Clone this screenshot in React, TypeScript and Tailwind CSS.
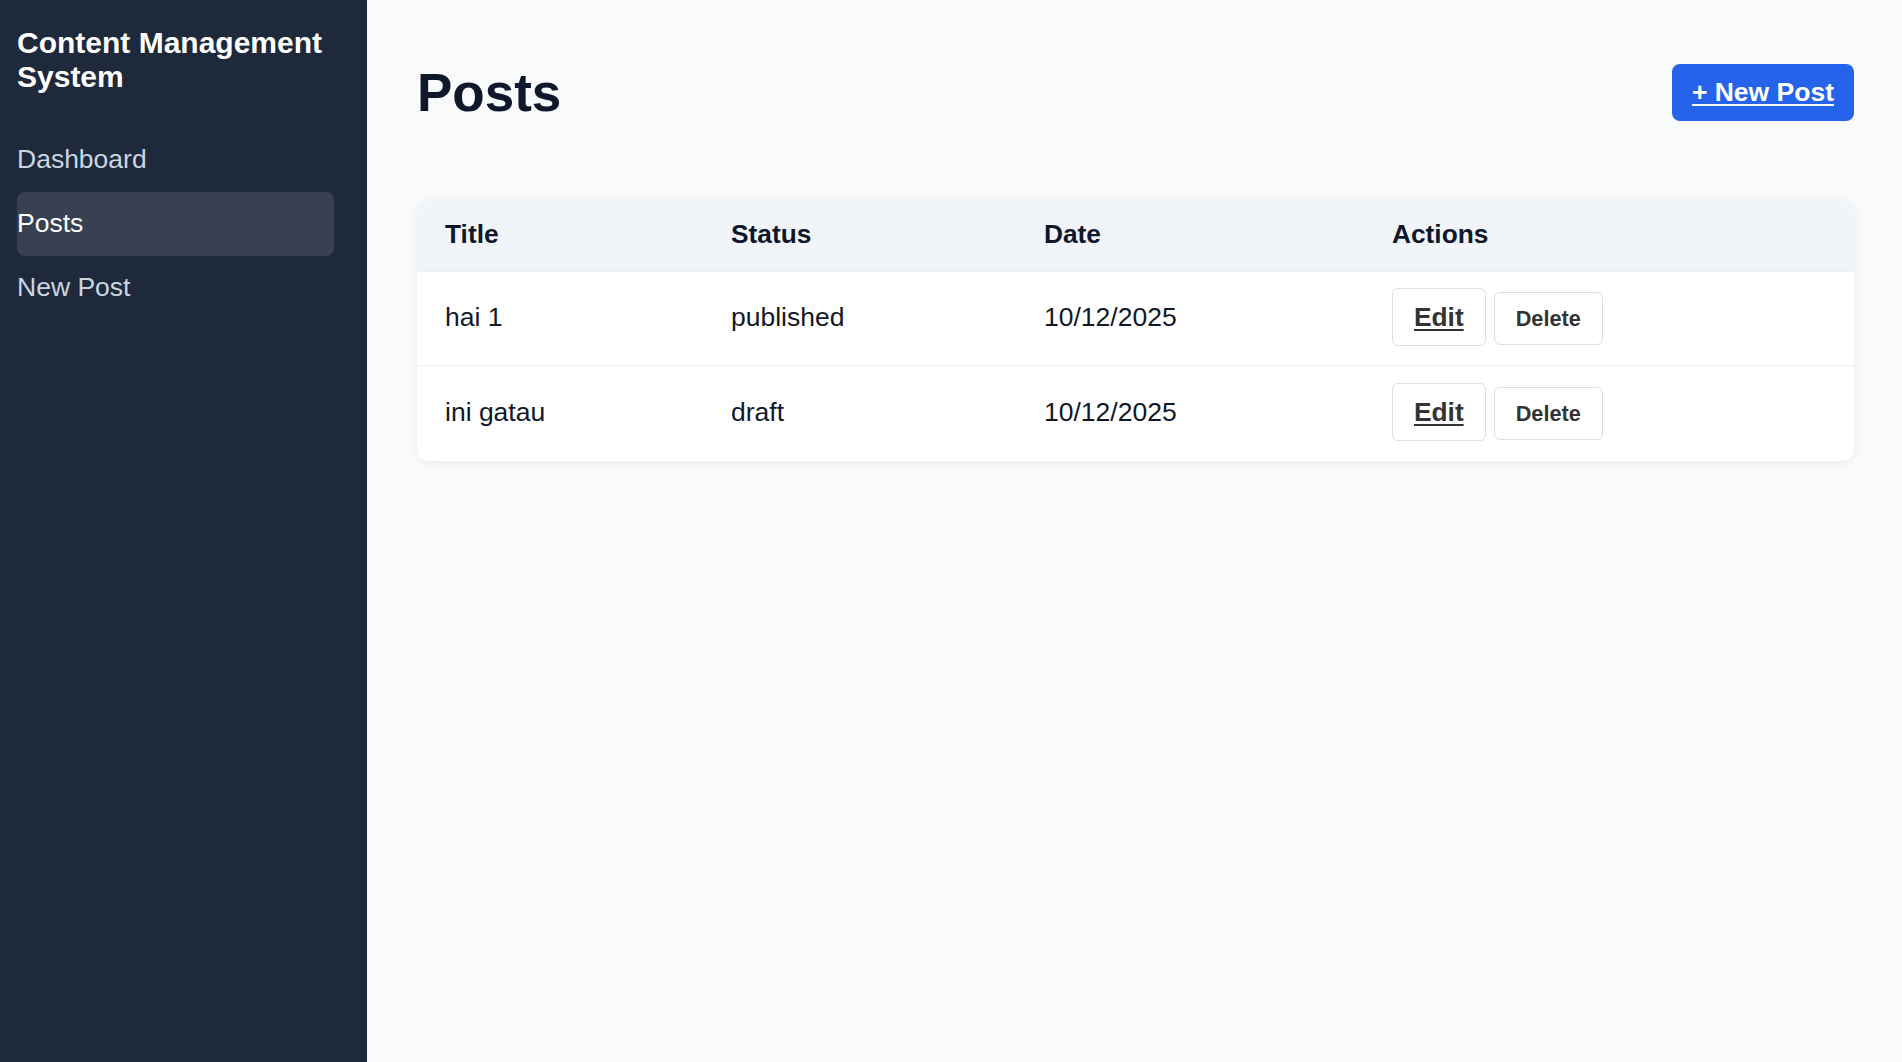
import React from "react";

const posts = [
  { title: "hai 1", status: "published", date: "10/12/2025" },
  { title: "ini gatau", status: "draft", date: "10/12/2025" },
];

export default function App() {
  return (
    <div
      className="flex h-[1062px] w-full overflow-hidden"
      style={{ fontFamily: '"Liberation Sans", Arial, sans-serif' }}
    >
      <aside className="w-[367px] shrink-0 bg-[#1e293b] pl-[17px] pt-[26px]">
        <h2 className="text-[30px] font-bold leading-[34.4px] text-white">
          Content Management
          <br />
          System
        </h2>
        <nav className="mt-[33px] flex flex-col">
          <a className="flex h-[64px] w-[317px] items-center rounded-lg text-[26.5px] text-[#cbd5e1]">
            Dashboard
          </a>
          <a className="flex h-[64px] w-[317px] items-center rounded-lg bg-[#374151] text-[26.5px] text-white">
            Posts
          </a>
          <a className="flex h-[64px] w-[317px] items-center rounded-lg text-[26.5px] text-[#cbd5e1]">
            New Post
          </a>
        </nav>
      </aside>
      <main className="flex-1 bg-[#f8fafc] pl-[50px] pr-[48px] pt-[48px]">
        <div className="flex h-[89px] items-center justify-between">
          <h1 className="text-[53px] font-bold leading-none text-[#0f172a]">Posts</h1>
          <a className="flex h-[57px] items-center rounded-lg bg-[#2563eb] px-[20px] text-[26.5px] font-bold text-white underline underline-offset-[3px]">
            + New Post
          </a>
        </div>
        <div className="mt-[63px] overflow-hidden rounded-xl bg-white shadow-[0_2px_12px_rgba(15,23,42,0.06)]">
          <table className="w-full table-fixed border-collapse text-left">
            <colgroup>
              <col className="w-[286px]" />
              <col className="w-[313px]" />
              <col className="w-[348px]" />
              <col />
            </colgroup>
            <thead>
              <tr className="h-[71px] bg-[#f1f5f9]">
                <th className="pb-[2px] pl-[28px] text-[26.3px] font-bold text-[#0f172a]">Title</th>
                <th className="pb-[2px] pl-[28px] text-[26.3px] font-bold text-[#0f172a]">Status</th>
                <th className="pb-[2px] pl-[28px] text-[26.3px] font-bold text-[#0f172a]">Date</th>
                <th className="pb-[2px] pl-[28px] text-[26.3px] font-bold text-[#0f172a]">Actions</th>
              </tr>
            </thead>
            <tbody>
              {posts.map((p, i) => (
                <tr
                  key={i}
                  className={
                    i === 0
                      ? "h-[94px] border-t border-[#eceef1]"
                      : "h-[96px] border-t border-[#eceef1]"
                  }
                >
                  <td className="pl-[28px] text-[26.5px] text-[#111827]">{p.title}</td>
                  <td className="pl-[28px] text-[26.5px] text-[#111827]">{p.status}</td>
                  <td className="pl-[28px] text-[26.5px] text-[#111827]">{p.date}</td>
                  <td className="pb-[2px] pl-[28px]">
                    <div className="flex items-baseline gap-[8px]">
                      <a className="rounded-md border border-[#dedede] bg-white px-[21px] py-[13px] text-[26.3px] font-bold leading-[30px] text-[#333333] underline underline-offset-[3px]">
                        Edit
                      </a>
                      <button className="rounded-md border border-[#dedede] bg-white px-[21px] py-[13px] text-[21.7px] font-bold leading-[25px] text-[#333333]">
                        Delete
                      </button>
                    </div>
                  </td>
                </tr>
              ))}
            </tbody>
          </table>
        </div>
      </main>
    </div>
  );
}
